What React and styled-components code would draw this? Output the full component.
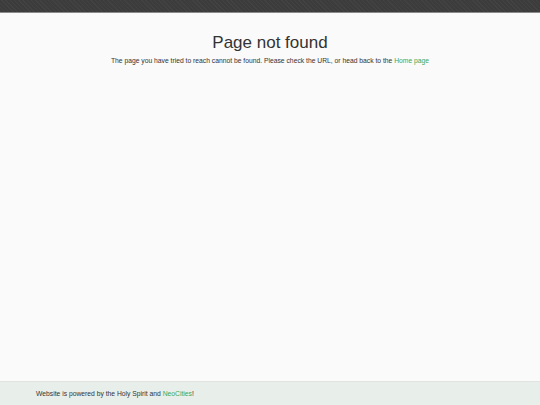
import React from 'react';
import styled, { createGlobalStyle } from 'styled-components';

const GlobalStyle = createGlobalStyle`
  html, body {
    margin: 0;
    padding: 0;
    background: #fafafa;
  }
  body {
    font-family: "Liberation Sans", Arial, sans-serif;
    color: #333;
  }
`;

const Page = styled.div`
  display: flex;
  flex-direction: column;
  min-height: 405px;
`;

const TopBar = styled.header`
  height: 12px;
  background-color: #3c3c3c;
  background-image: repeating-linear-gradient(45deg, rgba(255,255,255,0.03) 0 1px, transparent 1px 3px);
  border-bottom: 1px solid #8a8a8a;
`;

const Main = styled.main`
  flex: 1;
  text-align: center;
  padding-top: 19px;
`;

const Title = styled.h1`
  margin: 0;
  font-size: 17px;
  font-weight: normal;
  color: #333;
  line-height: 21px;
`;

const Message = styled.p`
  margin: 3px 0 0;
  font-size: 6.75px;
  line-height: 10px;
  color: #333;
`;

const Link = styled.a`
  color: #3aa757;
  text-decoration: none;
`;

const Footer = styled.footer`
  height: 23px;
  background: #e8efea;
  border-top: 1px solid #e2e4e2;
  display: flex;
  align-items: center;
  padding-left: 36px;
  font-size: 6.75px;
  color: #333;
`;

export default function App() {
  return (
    <>
      <GlobalStyle />
      <Page>
        <TopBar />
        <Main>
          <Title>Page not found</Title>
          <Message>
            The page you have tried to reach cannot be found. Please check the URL, or head back to the{' '}
            <Link href="#">Home page</Link>
          </Message>
        </Main>
        <Footer>
          <span>
            Website is powered by the Holy Spirit and <Link href="#">NeoCities</Link>!
          </span>
        </Footer>
      </Page>
    </>
  );
}
